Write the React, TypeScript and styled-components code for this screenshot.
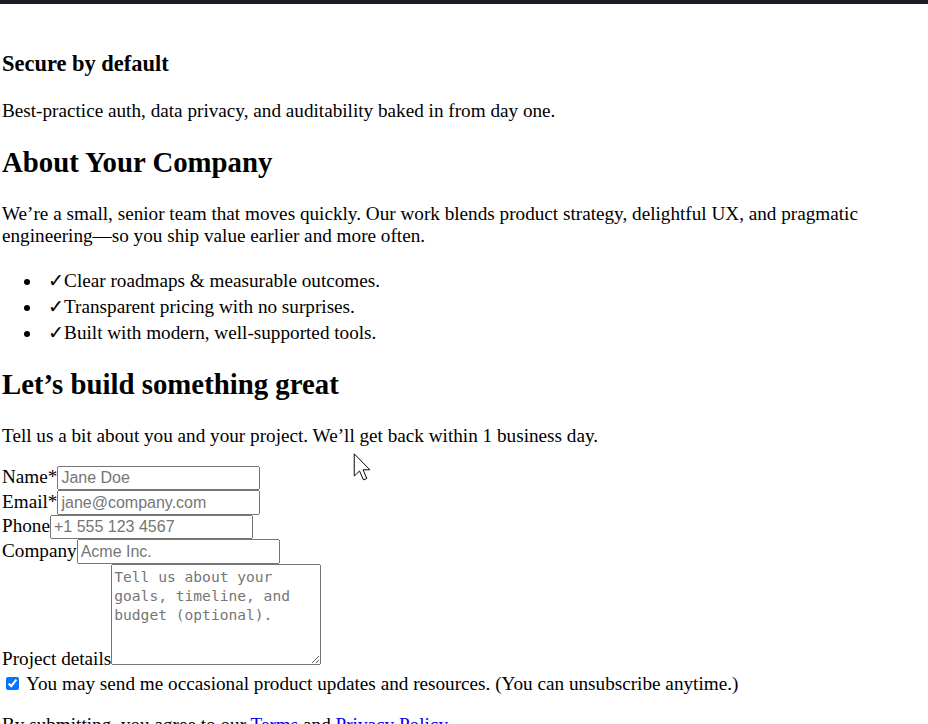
import React from 'react';
import styled, {createGlobalStyle} from 'styled-components';

const GlobalStyle = createGlobalStyle`
  html, body {
    margin: 0;
    padding: 0;
    background: #ffffff;
    color: #000000;
    font-family: "Liberation Serif", "Times New Roman", serif;
    font-size: 19.2px;
  }
`;

const TopBar = styled.div`
  height: 4px;
  background: #1b1d25;
`;

const Page = styled.main`
  position: relative;
  padding: 25px 0 40px 2px;
`;

const FeatureTitle = styled.h3`
  font-size: 1.17em;
  font-weight: bold;
  margin: 1em 0;
`;

const Text = styled.p`
  margin: 1em 0;
`;

const SectionTitle = styled.h2`
  font-size: 1.5em;
  font-weight: bold;
  margin: 0.83em 0;
`;

const Checks = styled.ul`
  margin: 18.2px 0 19.2px;
  padding-left: 40px;

  > li {
    padding-top: 4px;
  }
`;

const Tick = styled.span`
  font-family: "DejaVu Sans", sans-serif;
  line-height: 1;
  margin-left: 6px;
`;

const Row = styled.div``;

const ConsentRow = styled.div`
  margin-top: 3px;
`;

const Field = styled.input`
  box-sizing: border-box;
  font-family: "Liberation Sans", Arial, sans-serif;
  font-size: 16px;
  width: 203px;
  height: 24.5px;
  color: #000;

  &::placeholder {
    color: #767676;
  }
`;

const Notes = styled.textarea`
  font-family: "DejaVu Sans Mono", monospace;
  font-size: 14.6px;
  line-height: 19px;
  width: 204px;
  height: 95px;
  padding: 2px;
  margin: 0;
  resize: both;

  &::placeholder {
    color: #767676;
  }
`;

const Consent = styled.input`
  margin: 3px 3px 3px 4px;
`;

const Legal = styled.a`
  color: #0000ee;
`;

const Cursor = styled.svg`
  position: absolute;
  left: 353px;
  top: 449px;
  pointer-events: none;
`;

const items = [
  'Clear roadmaps & measurable outcomes.',
  'Transparent pricing with no surprises.',
  'Built with modern, well-supported tools.',
];

export default function App() {
  return (
    <>
      <GlobalStyle/>
      <TopBar/>
      <Page>
        <FeatureTitle>Secure by default</FeatureTitle>
        <Text>Best-practice auth, data privacy, and auditability baked in from day one.</Text>

        <SectionTitle>About Your Company</SectionTitle>
        <Text>
          We’re a small, senior team that moves quickly. Our work blends product strategy, delightful UX, and pragmatic
          engineering—so you ship value earlier and more often.
        </Text>
        <Checks>
          {items.map(item =>
            <li key={item}><Tick>✓</Tick>{item}</li>
          )}
        </Checks>

        <SectionTitle>Let’s build something great</SectionTitle>
        <Text>Tell us a bit about you and your project. We’ll get back within 1 business day.</Text>

        <form onSubmit={e => e.preventDefault()}>
          <Row><label>Name*<Field type="text" placeholder="Jane Doe"/></label></Row>
          <Row><label>Email*<Field type="email" placeholder="jane@company.com"/></label></Row>
          <Row><label>Phone<Field type="tel" placeholder="+1 555 123 4567"/></label></Row>
          <Row><label>Company<Field type="text" placeholder="Acme Inc."/></label></Row>
          <Row>
            <label>Project details<Notes placeholder="Tell us about your goals, timeline, and budget (optional)."/></label>
          </Row>
          <ConsentRow>
            <label>
              <Consent type="checkbox" defaultChecked/> You may send me occasional product updates and resources. (You can unsubscribe anytime.)
            </label>
          </ConsentRow>
          <Text>
            By submitting, you agree to our <Legal href="#terms">Terms</Legal> and <Legal href="#privacy">Privacy Policy</Legal>.
          </Text>
        </form>

        <Cursor width="19" height="28" viewBox="0 0 13 20">
          <path d="M0.6 0.6 L0.6 16.4 L4.4 12.9 L7.2 19.2 L9.6 18.2 L6.9 12 L11.8 12 Z"
                fill="#ffffff" stroke="#000000" strokeWidth="0.7" strokeLinejoin="round"/>
        </Cursor>
      </Page>
    </>
  );
}
